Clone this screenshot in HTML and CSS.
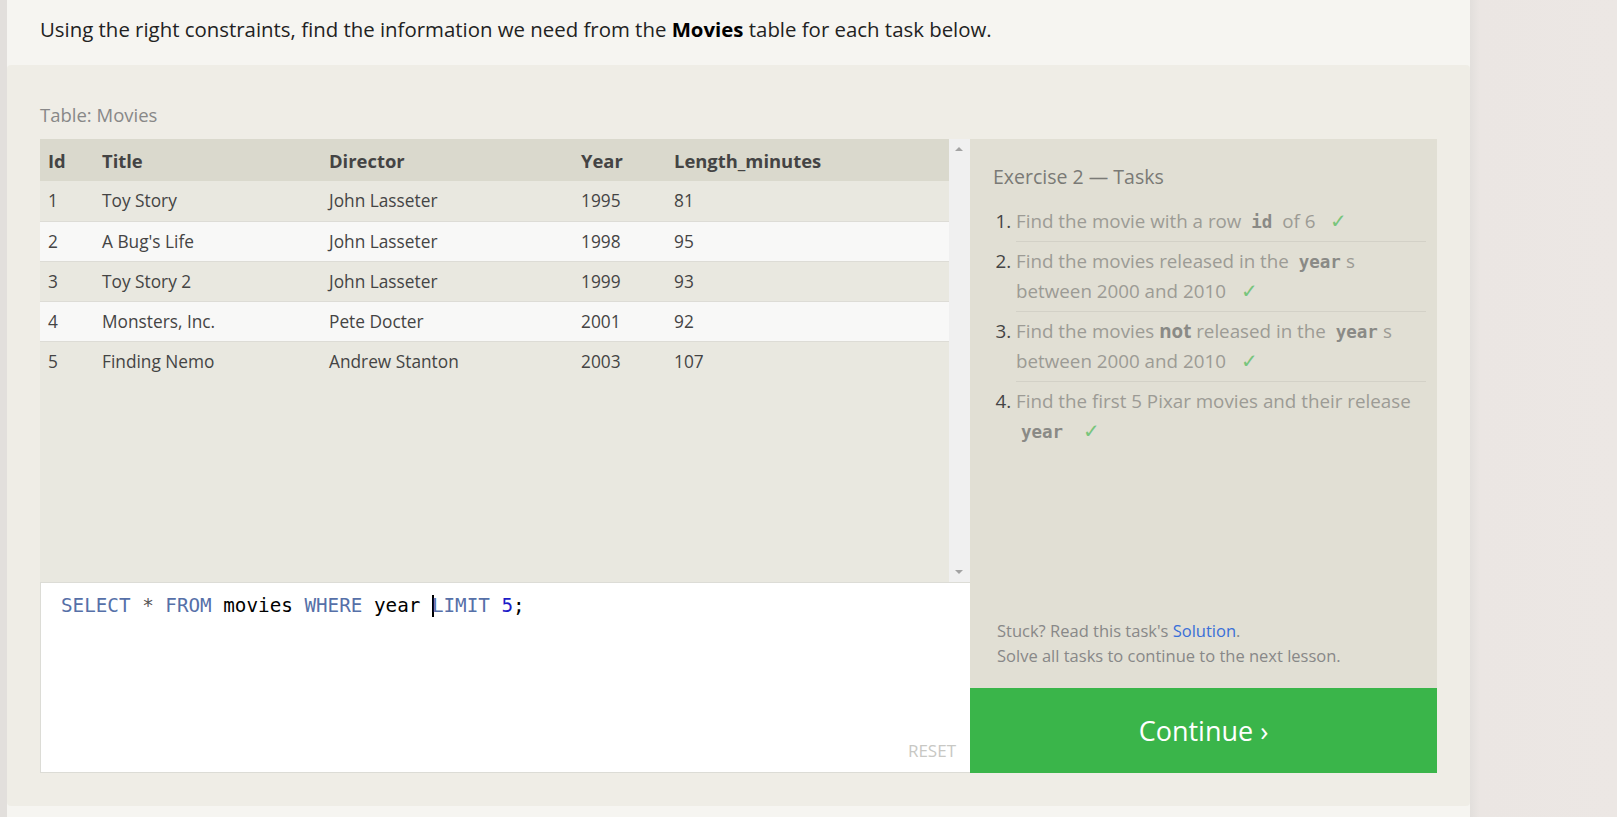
FILE: index.html
```html
<!DOCTYPE html>
<html lang="en">
<head>
<meta charset="utf-8">
<title>SQL Lesson - Exercise 2</title>
<link rel="stylesheet" href="styles.css">
</head>
<body>
<div class="layout">
  <div class="edge-left"></div>
  <main class="main">
    <header class="intro">
      <p>Using the right constraints, find the information we need from the <strong>Movies</strong> table for each task below.</p>
    </header>
    <section class="card">
      <div class="table-label">Table: Movies</div>
      <div class="workspace">
        <div class="left-col">
          <div class="table-area">
            <div class="table-scroll">
              <table class="movies">
                <colgroup>
                  <col class="c-id"><col class="c-title"><col class="c-director"><col class="c-year"><col class="c-len">
                </colgroup>
                <thead>
                  <tr><th>Id</th><th>Title</th><th>Director</th><th>Year</th><th>Length_minutes</th></tr>
                </thead>
                <tbody>
                  <tr><td>1</td><td>Toy Story</td><td>John Lasseter</td><td>1995</td><td>81</td></tr>
                  <tr><td>2</td><td>A Bug's Life</td><td>John Lasseter</td><td>1998</td><td>95</td></tr>
                  <tr><td>3</td><td>Toy Story 2</td><td>John Lasseter</td><td>1999</td><td>93</td></tr>
                  <tr><td>4</td><td>Monsters, Inc.</td><td>Pete Docter</td><td>2001</td><td>92</td></tr>
                  <tr><td>5</td><td>Finding Nemo</td><td>Andrew Stanton</td><td>2003</td><td>107</td></tr>
                </tbody>
              </table>
            </div>
            <div class="scrollbar">
              <span class="arrow up"></span>
              <span class="arrow down"></span>
            </div>
          </div>
          <div class="editor">
            <div class="code"><span class="kw">SELECT</span> <span class="op">*</span> <span class="kw">FROM</span> movies <span class="kw">WHERE</span> year <span class="cursor"></span><span class="kw">LIMIT</span> <span class="num">5</span>;</div>
            <div class="reset">RESET</div>
          </div>
        </div>
        <aside class="right-col">
          <div class="tasks">
            <h3 class="tasks-title">Exercise 2 — Tasks</h3>
            <ol class="task-list">
              <li>Find the movie with a row <code>id</code> of 6 <span class="check">✓</span></li>
              <li>Find the movies released in the <code>year</code>s between 2000 and 2010 <span class="check">✓</span></li>
              <li>Find the movies <b>not</b> released in the <code>year</code>s between 2000 and 2010 <span class="check">✓</span></li>
              <li>Find the first 5 Pixar movies and their release <code>year</code> <span class="check">✓</span></li>
            </ol>
            <div class="help">
              <p>Stuck? Read this task's <a href="#">Solution</a>.</p>
              <p>Solve all tasks to continue to the next lesson.</p>
            </div>
          </div>
          <a class="continue" href="#">Continue ›</a>
        </aside>
      </div>
    </section>
  </main>
  <div class="edge-right"></div>
</div>
</body>
</html>
```
FILE: styles.css
```css
* { box-sizing: border-box; }
html, body { margin: 0; padding: 0; }
body {
  font-family: "Open Sans", "Noto Sans", sans-serif;
  color: #333;
  background: #ece7e4;
}
.layout {
  display: flex;
  min-height: 817px;
}
.edge-left {
  width: 7px;
  flex: none;
  background: #e2dfdc;
}
.main {
  width: 1463px;
  flex: none;
  background: #f6f5f1;
  padding-bottom: 11px;
}
.edge-right {
  flex: 1;
  background: linear-gradient(to right, #e2dfdc 0, #ebe6e3 10px, #ece7e4 100%);
}
.intro {
  height: 65px;
  padding: 15px 33px 0;
}
.intro p {
  margin: 0;
  font-size: 20.4px;
  line-height: 28px;
  color: #222;
}
.intro strong { color: #000; font-weight: 700; }

.card {
  background: #efede6;
  border-radius: 4px;
  padding: 38px 33px 33px;
}
.table-label {
  font-size: 18.5px;
  line-height: 24px;
  color: #888;
  margin-bottom: 12px;
}
.workspace {
  display: flex;
}
.left-col {
  width: 930px;
  display: flex;
  flex-direction: column;
}
.table-area {
  height: 443px;
  display: flex;
}
.table-scroll {
  flex: 1;
  background: #e9e8e0;
}
.movies {
  width: 100%;
  border-collapse: collapse;
  table-layout: fixed;
  font-size: 17.3px;
  color: #444;
}
.c-id { width: 54px; }
.c-title { width: 227px; }
.c-director { width: 252px; }
.c-year { width: 93px; }
.movies th, .movies td {
  text-align: left;
  padding: 0 8px;
  height: 40px;
}
.movies th {
  background: #dad9cd;
  font-weight: 700;
  font-size: 18.4px;
  height: 42px;
  color: #444;
}
.movies tbody tr { border-top: 1px solid #dddcd6; }
.movies tbody tr:first-child { border-top: none; }
.movies tbody tr:nth-child(odd) { background: #e9e8e0; }
.movies tbody tr:nth-child(even) { background: #f8f8f7; }
.scrollbar {
  width: 21px;
  background: #f0f0f0;
  position: relative;
}
.arrow {
  position: absolute;
  left: 6px;
  width: 0; height: 0;
  border-left: 4px solid transparent;
  border-right: 4px solid transparent;
}
.arrow.up { top: 8px; border-bottom: 4px solid #a3a3a3; }
.arrow.down { bottom: 8px; border-top: 4px solid #a3a3a3; }

.editor {
  height: 191px;
  background: #fff;
  border: 1px solid #dcdcd6;
  border-right: none;
  display: flex;
  flex-direction: column;
  justify-content: space-between;
  padding: 10px 14px 10px 20px;
}
.code {
  font-family: "DejaVu Sans Mono", "Liberation Mono", monospace;
  font-size: 19.25px;
  line-height: 26px;
  color: #000;
  white-space: pre;
}
.code .kw { color: #5670a8; }
.code .op { color: #555; }
.code .num { color: #1c1cc8; }
.cursor {
  display: inline-block;
  width: 2px;
  height: 22px;
  background: #000;
  vertical-align: -5px;
  margin-right: -2px;
}
.reset {
  align-self: flex-end;
  font-size: 17px;
  line-height: 22px;
  color: #c8c8c4;
}

.right-col {
  width: 467px;
  display: flex;
  flex-direction: column;
}
.tasks {
  flex: 1;
  background: #e1dfd4;
  padding: 24px 11px 20px 23px;
  display: flex;
  flex-direction: column;
}
.tasks-title {
  margin: 0 0 10px;
  font-size: 19.5px;
  line-height: 28px;
  font-weight: 400;
  color: #7a7a76;
}
.task-list {
  margin: 0;
  padding: 0 0 0 23px;
  font-size: 18.8px;
  line-height: 29.5px;
  color: #9c9b95;
}
.task-list li {
  padding: 5.5px 0 4.5px 0;
  border-bottom: 1px solid #d3d1c7;
}
.task-list li:last-child { border-bottom: none; }
.task-list li::marker { color: #444; }
.task-list code {
  font-family: "DejaVu Sans Mono", "Liberation Mono", monospace;
  font-weight: 700;
  font-size: 17.5px;
  line-height: 1;
  color: #8a8a86;
  padding: 0 5px;
}
.task-list b { color: #8a8a86; }
.check {
  color: #78c57c;
  margin-left: 10px;
  font-size: 20px;
  line-height: 1;
}
.help {
  margin-top: auto;
  padding-left: 4px;
  font-size: 16.5px;
  line-height: 25px;
  color: #888;
}
.help p { margin: 0; }
.help a { color: #3a6fd8; text-decoration: none; }
.continue {
  height: 85px;
  background: #3ab54a;
  color: #fff;
  text-decoration: none;
  font-size: 27px;
  display: flex;
  align-items: center;
  justify-content: center;
}
```
